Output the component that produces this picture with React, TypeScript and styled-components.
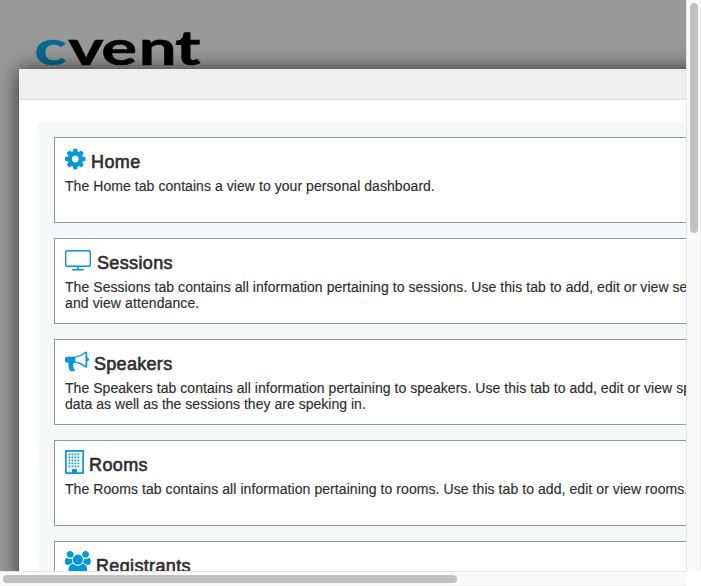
import React from 'react';
import styled, { createGlobalStyle } from 'styled-components';

const GlobalStyle = createGlobalStyle`
  * { box-sizing: border-box; }
  body { margin: 0; overflow: hidden; font-family: "Liberation Sans", Arial, sans-serif; color: #2d2d2d; }
`;

const Window = styled.div`
  display: grid;
  grid-template-columns: 686px 15px;
  grid-template-rows: 571px 15px;
  width: 701px;
  height: 586px;
  background: #fff;
`;

const Viewport = styled.div`
  overflow: hidden;
  background: #999;
`;

const Brand = styled.header`
  height: 69px;
  padding: 28px 0 0 30px;
`;

const Logo = styled.svg`
  display: block;
  width: 180px;
  height: 41px;
  overflow: visible;
`;

const Dialog = styled.main`
  position: relative;
  width: 900px;
  height: 700px;
  margin-left: 19px;
  background: #fff;
  box-shadow: 0 0 20px rgba(0, 0, 0, 0.7);
`;

const DialogBar = styled.div`
  height: 31px;
  background: #eee;
  border-bottom: 1px solid #e0e0e0;
`;

const Panel = styled.div`
  display: flex;
  flex-direction: column;
  gap: 15px;
  height: 660px;
  margin: 23px 0 0 20px;
  padding: 14px 0 0 15px;
  background: #f6f7f9;
`;

const Card = styled.section`
  flex: none;
  height: 86px;
  padding: 10px;
  border: 1px solid #949596;
  background: #fff;
`;

const Heading = styled.div`
  display: flex;
  height: 30px;
`;

const Glyph = styled.svg<{ $w: number }>`
  flex: none;
  width: ${p => p.$w}px;
  height: 24px;
  margin-top: -1px;
  fill: #0098dd;
`;

const Title = styled.h2<{ $gap: number; $spacing: number }>`
  margin: 3px 0 0 ${p => p.$gap}px;
  font-size: 18px;
  line-height: 22px;
  font-weight: 400;
  letter-spacing: ${p => p.$spacing}px;
  -webkit-text-stroke: 0.6px #2d2d2d;
`;

const Line = styled.p<{ $spacing: number }>`
  margin: 0;
  font-size: 14px;
  line-height: 16px;
  white-space: nowrap;
  letter-spacing: ${p => p.$spacing}px;
  -webkit-text-stroke: 0.15px #2d2d2d;
`;

const VerticalTrack = styled.div`
  padding: 3px 2px 0 3px;
  background: #fafafa;
  border-left: 1px solid #e6e6e6;
  border-right: 1px solid #ededed;
`;

const HorizontalTrack = styled.div`
  padding: 3px 0 0 3px;
  background: #fafafa;
  border-top: 1px solid #e6e6e6;
  border-bottom: 1px solid #ededed;
`;

const Thumb = styled.div<{ $w: number; $h: number }>`
  width: ${p => p.$w}px;
  height: ${p => p.$h}px;
  border-radius: 4px;
  background: #c1c1c1;
`;

const CogIcon = () => (
  <Glyph $w={21} viewBox="0 0 1568 1792">
    <path d="M1024 896q0-106-75-181t-181-75-181 75-75 181 75 181 181 75 181-75 75-181zm512-109v222q0 12-8 23t-20 13l-185 28q-19 54-39 91 35 50 107 138 10 12 10 25t-9 23q-27 37-99 108t-94 71q-12 0-26-9l-138-108q-44 23-91 38-16 136-29 186-7 28-36 28H657q-14 0-24.5-8.5T621 1634l-28-184q-49-16-90-37l-141 107q-10 9-25 9-14 0-25-11-126-114-165-168-7-10-7-23 0-12 8-23 15-21 51-66.5t54-70.5q-27-50-41-99l-183-27q-13-2-21-12.5T0 1005V783q0-12 8-23t19-13l186-28q14-46 39-92-40-57-107-138-10-12-10-24 0-10 9-23 26-36 98.5-107.5T337 263q13 0 26 10l138 107q44-23 91-38 16-136 29-186 7-28 36-28h222q14 0 24.5 8.5T915 158l28 184q49 16 90 37l142-107q9-9 24-9 13 0 25 10 129 119 165 170 7 8 7 22 0 12-8 23-15 21-51 66.5t-54 70.5q26 50 41 98l183 28q13 2 21 12.5t8 23.5z" />
  </Glyph>
);

const ScreenIcon = () => (
  <Glyph $w={26} viewBox="0 0 26 24">
    <path fillRule="evenodd" d="M2 2h22q2 0 2 2v13q0 2-2 2h-10.300v2h4.300q1 0 1 .7t-1 .8h-10q-1 0-1-.8t1-.7h4.300v-2h-10.300q-2 0-2-2v-13q0-2 2-2zm0 1.400q-.6 0-.6.6v13q0 .6.6.6h22q.6 0 .6-.6v-13q0-.6-.6-.6z" />
  </Glyph>
);

const BullhornIcon = () => (
  <Glyph $w={24} viewBox="0 0 1792 1792">
    <path d="M1664 640q53 0 90.5 37.5t37.5 90.5-37.5 90.5-90.5 37.5v384q0 52-38 90t-90 38q-417-347-812-380-58 19-91 66t-31 100.5 40 92.5q-20 33-23 65.500t6 58 33.5 55 48 50 61.5 50.5q-29 58-111.5 83t-168.500 11.5-132-55.5q-7-23-29.5-87.5t-32-94.5-23-89-15-101 3.5-98.500 22-110.500H160q-66 0-113-47T0 928V736q0-66 47-113t113-47h480q435 0 896-384 52 0 90 38t38 90v384zm-128 604V318q-394 302-768 343v270q377 42 768 313z" />
  </Glyph>
);

const dots = [4.5, 7.5, 10.5, 13.5];

const BuildingIcon = () => (
  <Glyph $w={19} viewBox="0 0 19 24">
    <path fillRule="evenodd" d="M1 0h17q1 0 1 1v22q0 1-1 1h-17q-1 0-1-1v-22q0-1 1-1zm.7 1.700v20.600h5.300v-2.600q0-.7.7-.7h3.600q.7 0 .7.7v2.600h5.300v-20.600z" />
    {[4, 7, 10, 13, 16].map(y => dots.map(x => <rect key={`${x}-${y}`} x={x - 1} y={y - 0.5} width="1.700" height="1.700" />))}
  </Glyph>
);

const UsersIcon = () => (
  <Glyph $w={26} viewBox="0 0 1941 1792">
    <path d="M593 896q-162 5-265 128H194q-82 0-138-40.500T0 865q0-353 124-353 6 0 43.5 21t97.5 42.500T384 597q67 0 133-23-5 37-5 66 0 139 81 256zm1071 637q0 120-73 189.500t-194 69.500H523q-121 0-194-69.500T256 1533q0-53 3.500-103.500t14-109T300 1212t43-97.500 62-81 85.500-53.500T602 960q10 0 43 21.500t73 48 107 48 135 21.500 135-21.500 107-48 73-48 43-21.500q61 0 111.500 20t85.500 53.500 62 81 43 97.500 26.500 108.500 14 109 3.500 103.500zM640 256q0 106-75 181t-181 75-181-75-75-181 75-181T384 0t181 75 75 181zm704 384q0 159-112.500 271.500T960 1024 688.500 911.500 576 640t112.500-271.500T960 256t271.500 112.500T1344 640zm576 225q0 78-56 118.500t-138 40.500h-134q-103-123-265-128 81-117 81-256 0-29-5-66 66 23 133 23 59 0 119-21.500t97.500-42.500 43.500-21q124 0 124 353zm-128-609q0 106-75 181t-181 75-181-75-75-181 75-181 181-75 181 75 75 181z" />
  </Glyph>
);

interface Tab {
  title: string;
  gap: number;
  titleSpacing: number;
  icon: React.ReactNode;
  lines: { text: string; spacing: number }[];
}

const tabs: Tab[] = [
  { title: 'Home', gap: 5, titleSpacing: 0.4, icon: <CogIcon />, lines: [{ text: 'The Home tab contains a view to your personal dashboard.', spacing: 0.06 }] },
  { title: 'Sessions', gap: 6, titleSpacing: 0.35, icon: <ScreenIcon />, lines: [
    { text: 'The Sessions tab contains all information pertaining to sessions. Use this tab to add, edit or view session data', spacing: 0.06 },
    { text: 'and view attendance.', spacing: 0.1 },
  ] },
  { title: 'Speakers', gap: 5, titleSpacing: 0.3, icon: <BullhornIcon />, lines: [
    { text: 'The Speakers tab contains all information pertaining to speakers. Use this tab to add, edit or view speaker', spacing: 0.05 },
    { text: 'data as well as the sessions they are speking in.', spacing: 0.025 },
  ] },
  { title: 'Rooms', gap: 5, titleSpacing: 0.4, icon: <BuildingIcon />, lines: [{ text: 'The Rooms tab contains all information pertaining to rooms. Use this tab to add, edit or view rooms.', spacing: 0.07 }] },
  { title: 'Registrants', gap: 5, titleSpacing: 0.35, icon: <UsersIcon />, lines: [] },
];

export default function App() {
  return (
    <>
      <GlobalStyle />
      <Window>
        <Viewport>
          <Brand>
            <Logo viewBox="30 28 180 41" fontFamily="Lato" fontWeight="700" fontSize="48">
              <g transform="translate(0 64.500) scale(1.4 1)">
                <text x="24.500" y="0" fill="#006b92" stroke="#006b92" strokeWidth="0.4">c</text>
                <text x="48.700 72.300 99.200 125.300" y="0" fill="#000" stroke="#000" strokeWidth="0.5">vent</text>
              </g>
              <path d="M175 45 188 32v13z" fill="#000" />
            </Logo>
          </Brand>
          <Dialog>
            <DialogBar />
            <Panel>
              {tabs.map(tab => (
                <Card key={tab.title}>
                  <Heading>
                    {tab.icon}
                    <Title $gap={tab.gap} $spacing={tab.titleSpacing}>{tab.title}</Title>
                  </Heading>
                  {tab.lines.map(line => (
                    <Line key={line.text} $spacing={line.spacing}>{line.text}</Line>
                  ))}
                </Card>
              ))}
            </Panel>
          </Dialog>
        </Viewport>
        <VerticalTrack><Thumb $w={8} $h={230} /></VerticalTrack>
        <HorizontalTrack><Thumb $w={454} $h={8} /></HorizontalTrack>
      </Window>
    </>
  );
}
